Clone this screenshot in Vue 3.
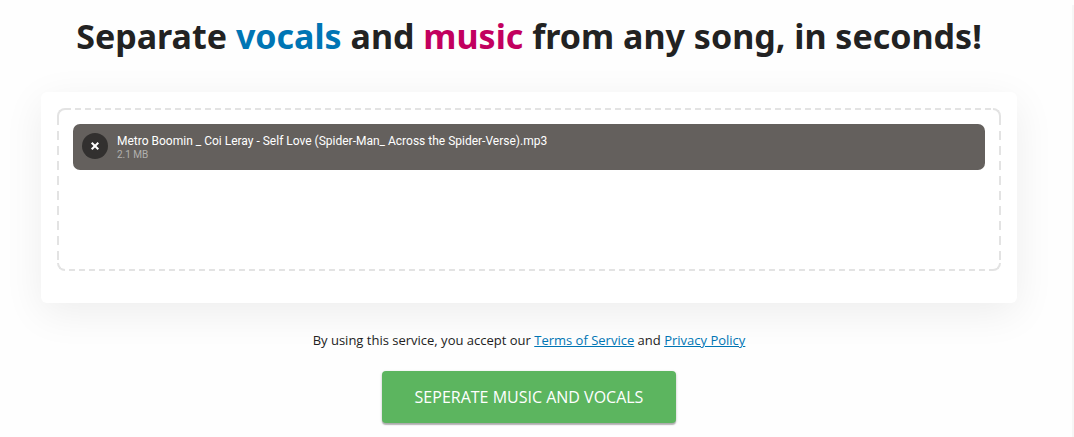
<script setup>
import { ref } from 'vue'

const files = ref([
  { name: 'Metro Boomin _ Coi Leray - Self Love (Spider-Man_ Across the Spider-Verse).mp3', size: '2.1 MB' }
])
const removeFile = (index) => files.value.splice(index, 1)
</script>

<template>
  <div class="page">
    <main class="content">
      <h1>Separate <span class="vocals">vocals</span> and <span class="music">music</span> from any song, in seconds!</h1>
      <section class="card">
        <div class="dropzone">
          <i class="corner tl"></i><i class="corner tr"></i><i class="corner bl"></i><i class="corner br"></i>
          <div v-for="(file, index) in files" :key="file.name" class="file">
            <button class="remove" type="button" aria-label="Remove" @click="removeFile(index)">
              <svg viewBox="0 0 26 26" aria-hidden="true"><path d="M9.7 9.7l6.6 6.6M16.3 9.7l-6.6 6.6" /></svg>
            </button>
            <div class="info">
              <span class="name">{{ file.name }}</span>
              <span class="size">{{ file.size }}</span>
            </div>
          </div>
        </div>
      </section>
      <p class="terms">By using this service, you accept our <a href="#terms">Terms of Service</a> and <a href="#privacy">Privacy Policy</a></p>
      <button class="submit" type="button">SEPERATE MUSIC AND VOCALS</button>
    </main>
    <div class="rail"></div>
  </div>
</template>

<style>
body { background: #fefefe; }
</style>

<style scoped>
.page {
  display: flex;
  min-height: 100vh;
  overflow: hidden;
  color: #222;
  font-family: "Open Sans", "Noto Sans", sans-serif;
}
.content {
  flex: 1;
  display: flex;
  flex-direction: column;
  align-items: center;
  padding: 12px 55px 12px 41px;
}
.rail {
  width: 2px;
  margin-top: 5px;
  background: #f6f6f6;
}
h1 {
  margin: 0 0 32px;
  font-family: "Noto Sans", "Open Sans", sans-serif;
  font-size: 34px;
  line-height: 48px;
  font-weight: 700;
  text-align: center;
}
.vocals { color: #0075b4; }
.music { color: #c2005f; }
.card {
  align-self: stretch;
  padding: 16px 16px 32px;
  border-radius: 6px;
  background: #fff;
  box-shadow: 0 10px 40px rgba(0, 0, 0, 0.07);
}
.dropzone {
  --dash: #e3e3e3;
  position: relative;
  box-sizing: border-box;
  min-height: 163px;
  padding: 16px;
  background:
    repeating-linear-gradient(90deg, var(--dash) 0 6px, transparent 6px 10px) 8px 0 / calc(100% - 18px) 2px no-repeat,
    repeating-linear-gradient(90deg, var(--dash) 0 6px, transparent 6px 10px) 12px 100% / calc(100% - 20px) 2px no-repeat,
    repeating-linear-gradient(180deg, var(--dash) 0 9px, transparent 9px 15px) 0 8px / 2px calc(100% - 18px) no-repeat,
    repeating-linear-gradient(180deg, var(--dash) 0 9px, transparent 9px 15px) 100% 8px / 2px calc(100% - 18px) no-repeat;
}
.corner {
  position: absolute;
  box-sizing: border-box;
  width: 8px;
  height: 8px;
  border: 0 solid var(--dash);
}
.tl { top: 0; left: 0; border-width: 2px 0 0 2px; border-top-left-radius: 8px; }
.tr { top: 0; right: 0; border-width: 2px 2px 0 0; border-top-right-radius: 8px; }
.bl { bottom: 0; left: 0; border-width: 0 0 2px 2px; border-bottom-left-radius: 8px; }
.br { bottom: 0; right: 0; border-width: 0 2px 2px 0; border-bottom-right-radius: 8px; }
.file {
  display: flex;
  align-items: center;
  gap: 9px;
  box-sizing: border-box;
  height: 46px;
  padding: 0 9px;
  border-radius: 7px;
  background: #64605d;
  color: #fff;
}
.remove {
  flex: none;
  width: 26px;
  height: 26px;
  margin: 0 0 2px;
  padding: 0;
  border: 0;
  border-radius: 50%;
  background: #32302f;
  cursor: pointer;
}
.remove svg {
  display: block;
  fill: none;
  stroke: #fff;
  stroke-width: 2;
}
.info {
  display: flex;
  flex-direction: column;
  min-width: 0;
  font-family: Roboto, "Open Sans", sans-serif;
}
.name {
  overflow: hidden;
  font-size: 12px;
  line-height: 16px;
  white-space: nowrap;
  text-overflow: ellipsis;
}
.size {
  font-size: 10px;
  line-height: 12px;
  color: #b2b0ae;
}
.terms {
  margin: 27px 0 21px;
  font-size: 13px;
  line-height: 20px;
}
.terms a { color: #0075b4; text-decoration: underline; }
.submit {
  height: 52px;
  padding: 0 33px;
  border: 0;
  border-radius: 4px;
  background: #5cb55f;
  box-shadow: 0 1px 3px rgba(0, 0, 0, 0.2), 0 2px 1px rgba(0, 0, 0, 0.22);
  color: #fff;
  font-family: inherit;
  font-size: 16px;
  line-height: 24px;
  cursor: pointer;
}
</style>
